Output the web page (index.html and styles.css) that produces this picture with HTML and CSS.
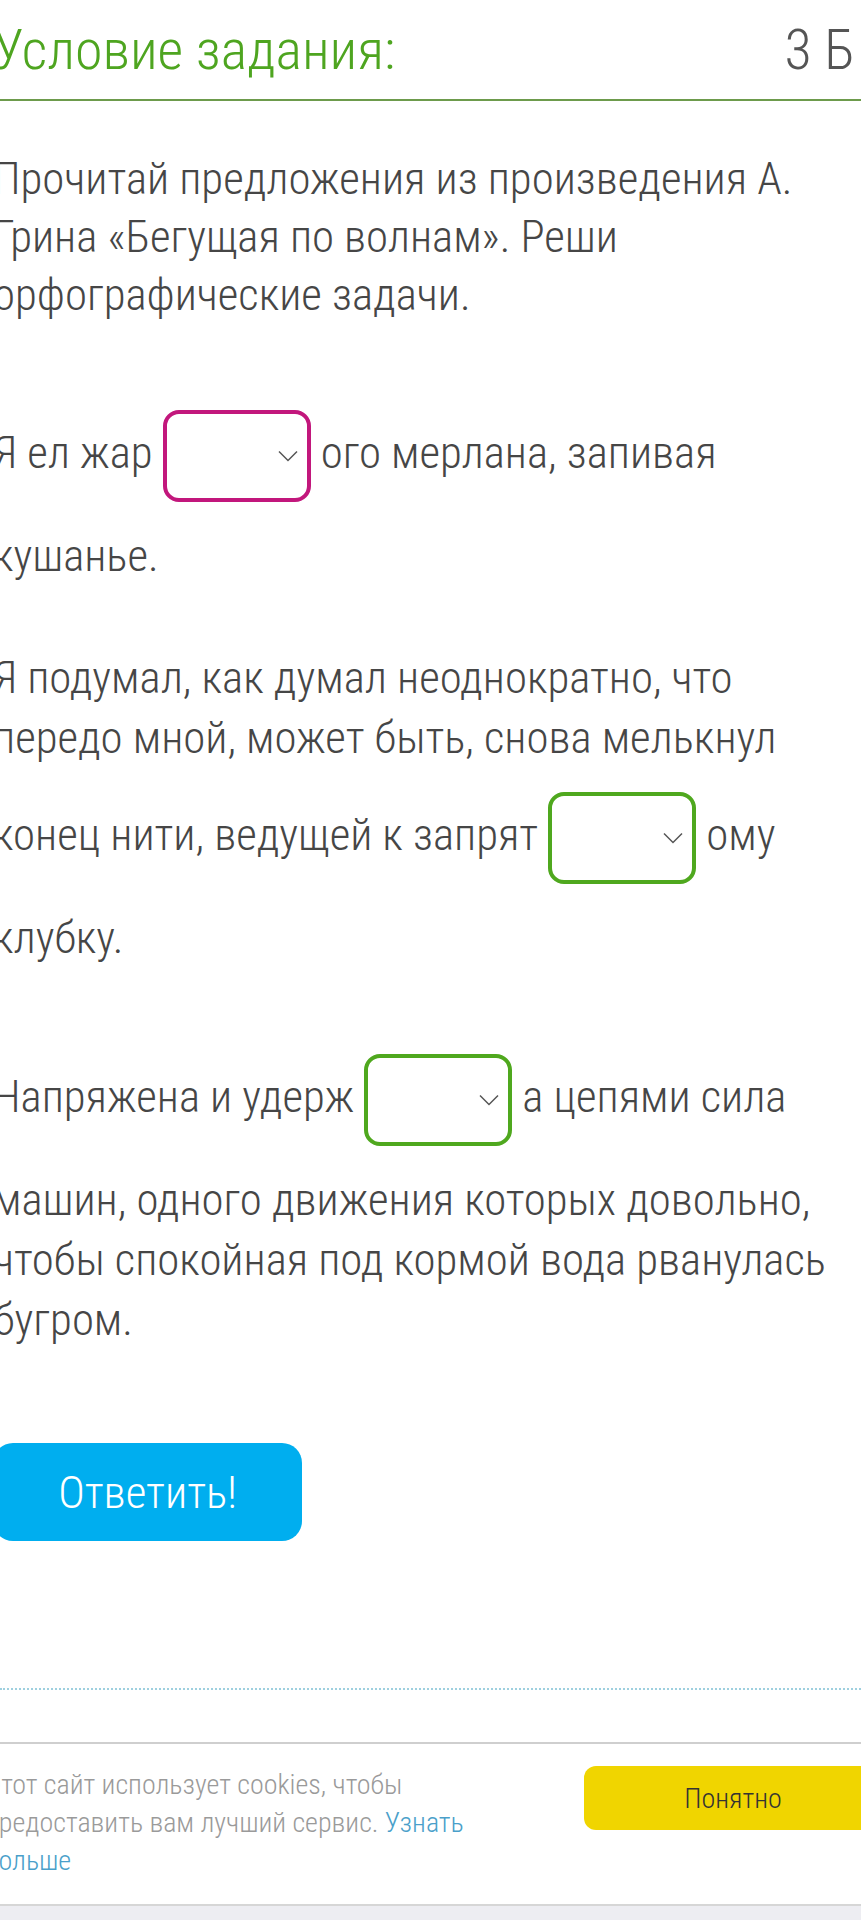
FILE: index.html
```html
<!DOCTYPE html>
<html lang="ru">
<head>
    <meta charset="UTF-8">
    <meta name="viewport" content="width=device-width, initial-scale=1.0">
    <title>Условие задания</title>
    <link rel="stylesheet" href="styles.css">
</head>
<body>
    <main class="task">
        <div class="task-head">
            <h2 class="task-title">Условие задания:</h2>
            <span class="task-points">3 Б</span>
        </div>

        <p class="task-text">Прочитай предложения из произведения А. Грина «Бегущая по волнам». Реши орфографические задачи.</p>

        <p class="sentence">Я ел жар <span class="gap gap-wrong"><select name="q1"><option></option><option>ен</option><option>енн</option></select><svg class="chevron" viewBox="0 0 20 12"><path d="M1 1.5 L10 10.5 L19 1.5"/></svg></span> ого мерлана, запивая кушанье.</p>

        <p class="sentence">Я подумал, как думал неоднократно, что передо мной, может быть, снова мелькнул конец нити, ведущей к запрят <span class="gap gap-right"><select name="q2"><option></option><option>ан</option><option>анн</option></select><svg class="chevron" viewBox="0 0 20 12"><path d="M1 1.5 L10 10.5 L19 1.5"/></svg></span> ому клубку.</p>

        <p class="sentence">Напряжена и удерж <span class="gap gap-right"><select name="q3"><option></option><option>ан</option><option>анн</option></select><svg class="chevron" viewBox="0 0 20 12"><path d="M1 1.5 L10 10.5 L19 1.5"/></svg></span> а цепями сила машин, одного движения которых довольно, чтобы спокойная под кормой вода рванулась бугром.</p>

        <button class="answer-btn">Ответить!</button>
    </main>

    <hr class="divider">

    <div class="cookie-bar">
        <p class="cookie-text">Этот сайт использует cookies, чтобы предоставить вам лучший сервис. <a href="#">Узнать больше</a></p>
        <button class="cookie-ok">Понятно</button>
    </div>
    <div class="site-footer"></div>
</body>
</html>
```

FILE: styles.css
```css
body {
    margin: 0;
    background-color: #fff;
    font-family: "Roboto Condensed", Roboto, "Liberation Sans Narrow", sans-serif;
    font-stretch: condensed;
    font-weight: 300;
    color: #464646;
    overflow-x: hidden;
}
.task {
    margin: 0 3px 0 -7px;
}
.task-head {
    display: flex;
    justify-content: space-between;
    align-items: baseline;
    margin-right: -3px;
    padding: 17px 6px 15px 0;
    border-bottom: 2px solid #6d9b4c;
    font-size: 56px;
    line-height: 1.2;
}
.task-title {
    margin: 0;
    font-size: inherit;
    font-weight: 300;
    color: #4ea520;
}
.task-points {
    color: #555;
}
.task-text {
    margin: 49px 0 0;
    font-size: 44.8px;
    line-height: 58px;
}
.sentence {
    margin: 62px 0 0;
    font-size: 44.8px;
    line-height: 60px;
}
.gap {
    position: relative;
    display: inline-block;
    box-sizing: border-box;
    width: 148px;
    height: 92px;
    margin: 24px 0;
    vertical-align: middle;
    border: 4px solid #4fa81e;
    border-radius: 16px;
}
.gap-wrong {
    border-color: #c2177c;
}
.gap select {
    appearance: none;
    -webkit-appearance: none;
    width: 100%;
    height: 100%;
    border: none;
    background: transparent;
    font: inherit;
    color: #444;
    cursor: pointer;
}
/* arrow drawn over the select */
.chevron {
    position: absolute;
    right: 9px;
    top: 50%;
    width: 20px;
    height: 12px;
    margin-top: -6px;
    pointer-events: none;
    fill: none;
    stroke: #555;
    stroke-width: 1.5;
}
.answer-btn {
    display: block;
    width: 309px;
    height: 98px;
    margin-top: 93px;
    border: none;
    border-radius: 20px;
    background-color: #00aeef;
    color: #fff;
    font: inherit;
    font-size: 45px;
    cursor: pointer;
}
.divider {
    margin: 147px 0 0;
    border: none;
    border-top: 2px dotted #9fd0df;
}
.cookie-bar {
    display: flex;
    align-items: flex-start;
    margin-top: 52px;
    padding: 22px 0 24px;
    border-top: 2px solid #cfcfcf;
    border-bottom: 2px solid #d6d6d6;
    background-color: #fff;
}
.cookie-text {
    flex: 1;
    margin: 0 0 0 -15px;
    font-size: 28px;
    line-height: 38px;
    color: #9a9a9a;
}
.cookie-text a {
    color: #4a9fca;
    text-decoration: none;
}
.cookie-ok {
    flex: none;
    width: 298px;
    height: 64px;
    margin: 0 -21px 0 40px;
    border: none;
    border-radius: 12px;
    background-color: #f0d500;
    color: #333;
    font: inherit;
    font-size: 28px;
    cursor: pointer;
}
.site-footer {
    height: 40px;
    background-color: #ededf2;
}
```
